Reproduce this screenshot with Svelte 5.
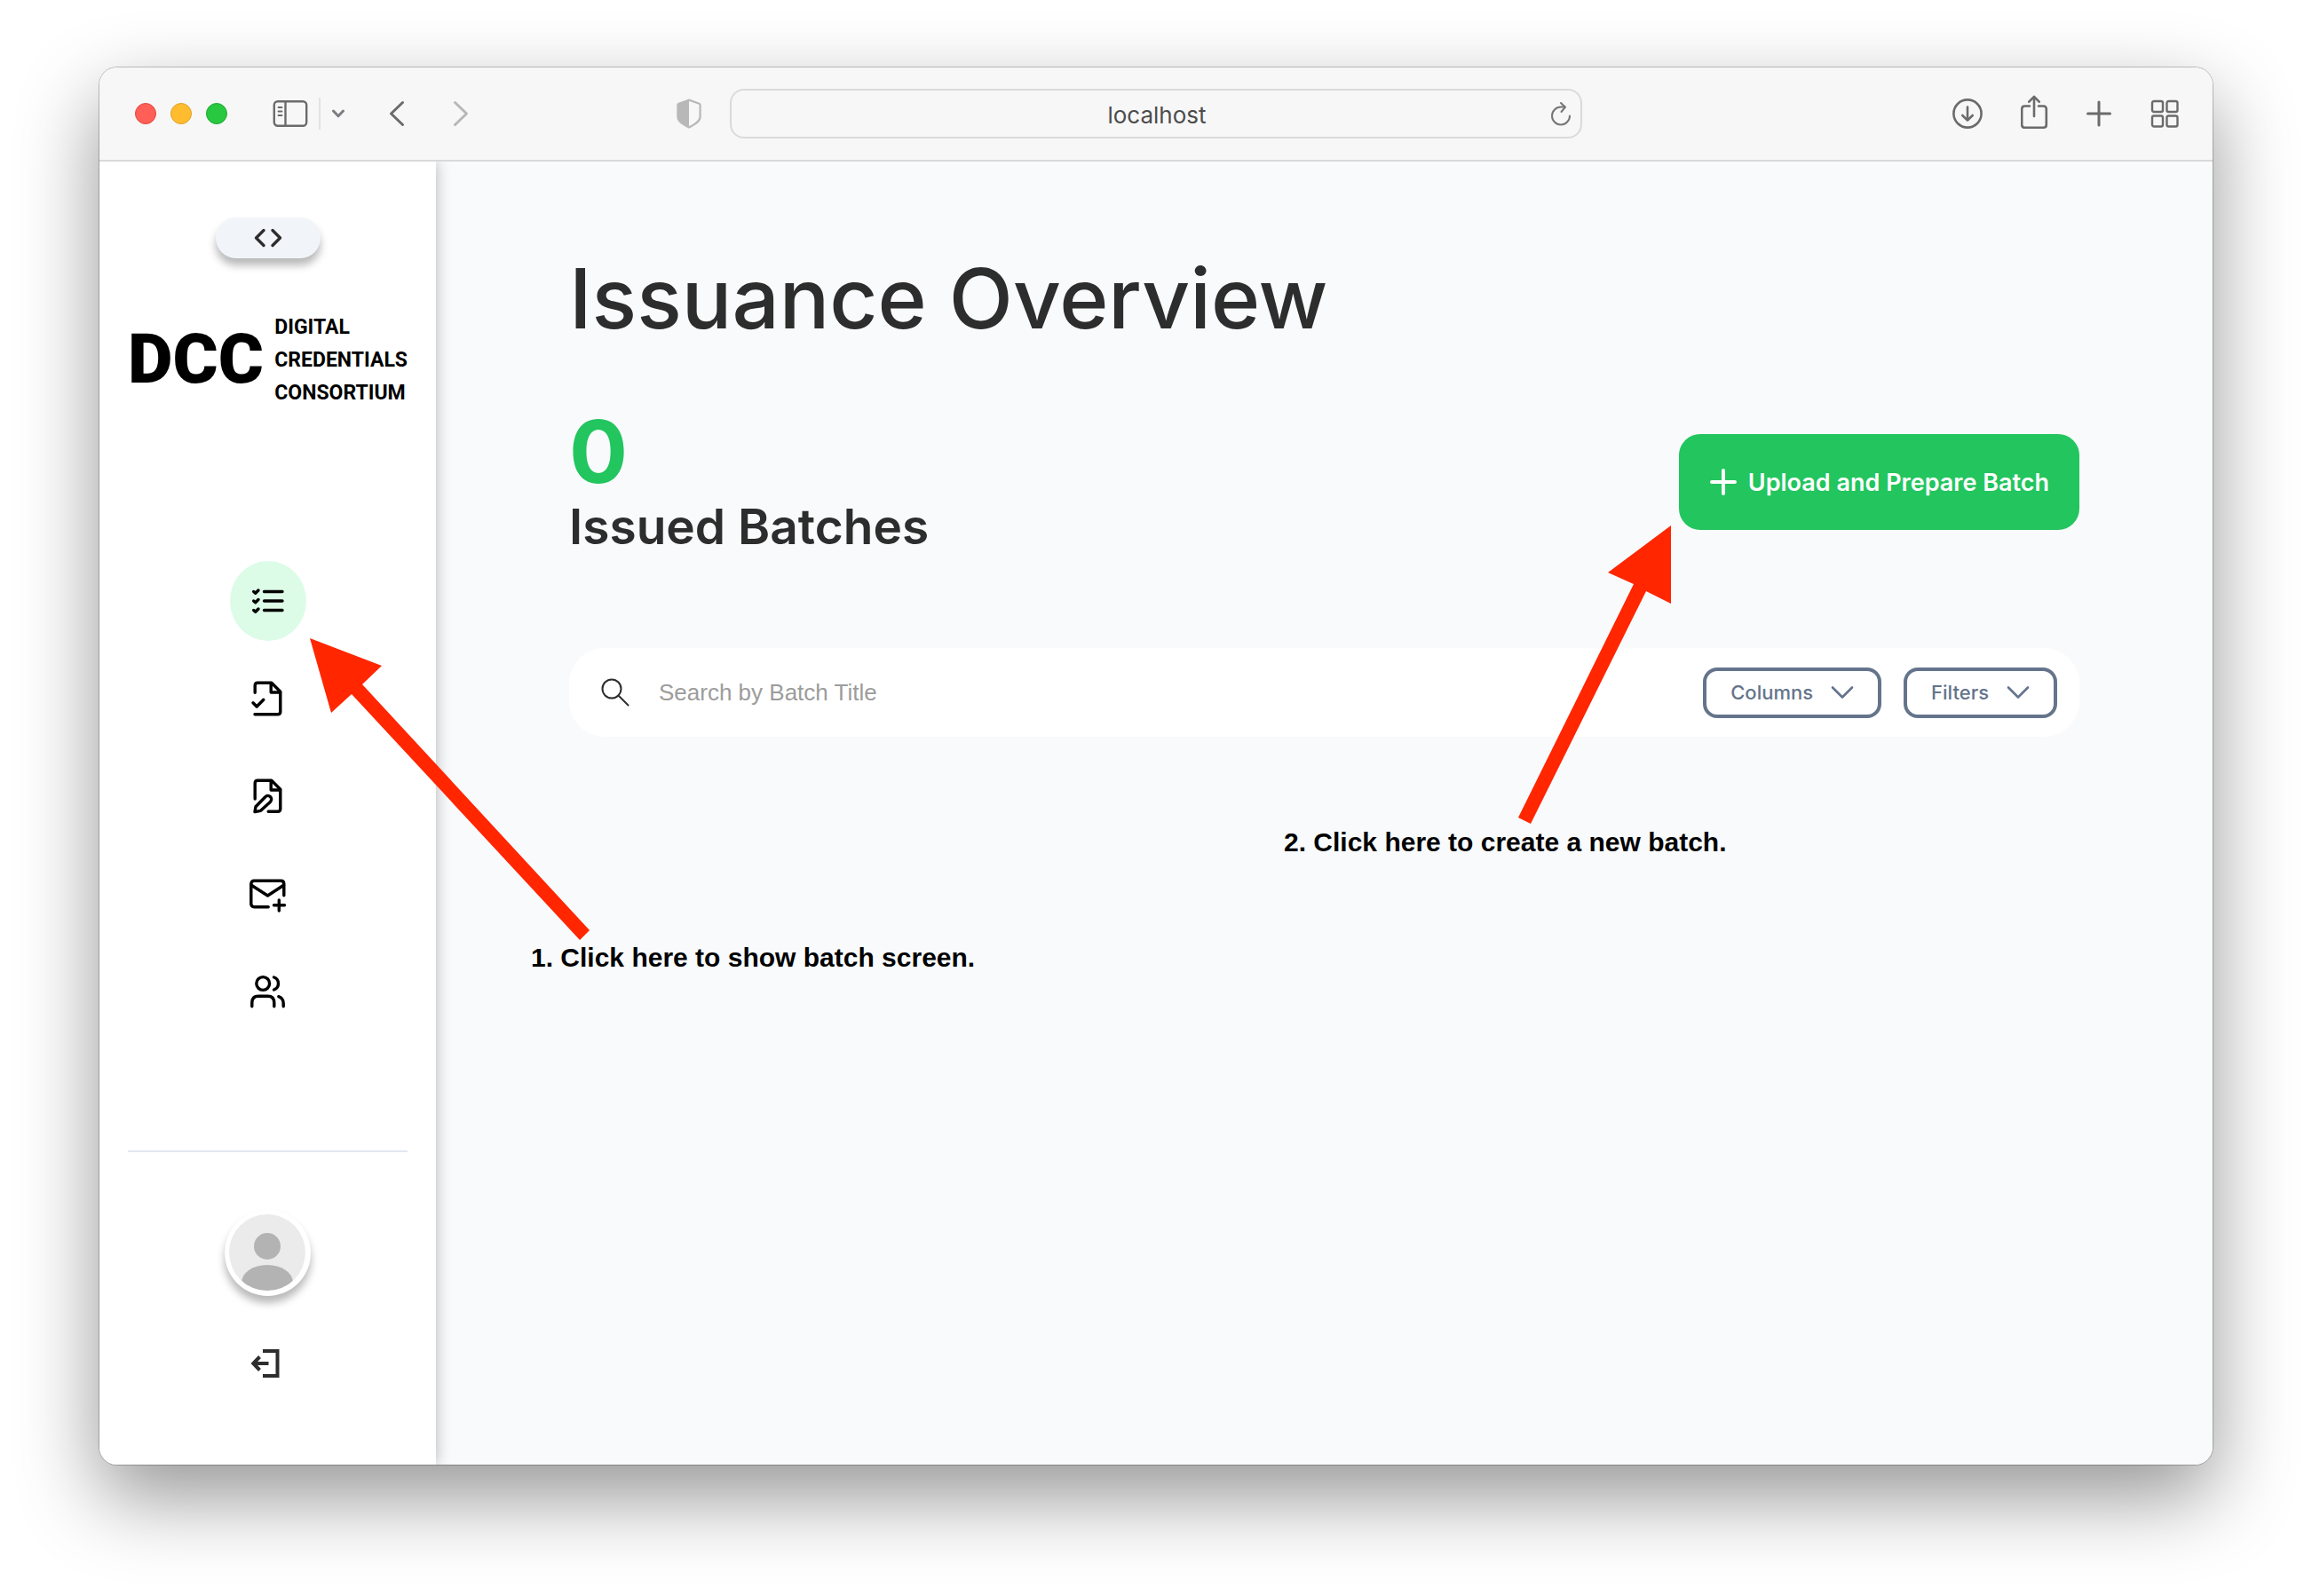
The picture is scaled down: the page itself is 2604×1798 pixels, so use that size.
<script>
  let url = $state('localhost');
  let query = $state('');
  const issued = 0;

  const nav = [
    { id: 'batches', label: 'Batches' },
    { id: 'verify', label: 'Verify credentials' },
    { id: 'templates', label: 'Credential templates' },
    { id: 'emails', label: 'Email templates' },
    { id: 'users', label: 'Users' }
  ];
  const menus = ['Columns', 'Filters'];
</script>

<div class="desktop">
  <div class="window">
    <header class="toolbar">
      <div class="tools start">
        <div class="lights">
          <button class="light red" aria-label="Close"></button>
          <button class="light amber" aria-label="Minimize"></button>
          <button class="light green" aria-label="Zoom"></button>
        </div>
        <div class="sidebar-tools">
          <button aria-label="Show sidebar">
            <svg width="40" height="32" viewBox="0 0 40 32" fill="none" stroke="#6b6b6b" stroke-width="2.4" stroke-linecap="round">
              <rect x="1.8" y="2.2" width="36.4" height="27.6" rx="4" />
              <path d="M14.5 2.5v27" />
              <path d="M6.5 9h4M6.5 13.5h4M6.5 18h4" stroke-width="1.8" />
            </svg>
          </button>
          <span class="rule"></span>
          <button aria-label="Tab groups">
            <svg width="16" height="12" viewBox="0 0 16 12" fill="none" stroke="#7d7d82" stroke-width="3" stroke-linecap="round" stroke-linejoin="round">
              <path d="M2.5 3L8 8.7L13.5 3" />
            </svg>
          </button>
        </div>
        <div class="history">
          <button aria-label="Back">
            <svg width="18" height="30" viewBox="0 0 18 30" fill="none" stroke="#6b6b6b" stroke-width="3" stroke-linecap="round" stroke-linejoin="round">
              <path d="M15.5 2.5L2.5 15L15.5 27.5" />
            </svg>
          </button>
          <button aria-label="Forward">
            <svg width="18" height="30" viewBox="0 0 18 30" fill="none" stroke="#b7b7b7" stroke-width="3" stroke-linecap="round" stroke-linejoin="round">
              <path d="M2.5 2.5L15.5 15L2.5 27.5" />
            </svg>
          </button>
        </div>
        <button class="shield" aria-label="Privacy report">
          <svg width="28" height="34" viewBox="0 0 28 34">
            <path d="M14 1.6L25.5 5.8Q26.6 6.2 26.6 7.4V20.5C26.6 26 20 29.5 14 32.6C8 29.5 1.4 26 1.4 20.5V7.4Q1.4 6.2 2.5 5.8Z" fill="none" stroke="#b8b8b8" stroke-width="2.2" />
            <path d="M14 1.6V32.6C8 29.5 1.4 26 1.4 20.5V7.4Q1.4 6.2 2.5 5.8Z" fill="#b8b8b8" />
          </svg>
        </button>
      </div>
      <div class="address">
        <input type="text" aria-label="Address" bind:value={url} />
        <button aria-label="Reload">
          <svg width="24" height="28" viewBox="0 0 24 28" fill="none" stroke="#757575" stroke-width="2" stroke-linecap="round" stroke-linejoin="round">
            <path d="M22 16.5A10 10 0 1 1 12 6.5H16.5" />
            <path d="M12 2L17 6.7L12.5 12" />
          </svg>
        </button>
      </div>
      <div class="tools end">
        <button aria-label="Downloads">
          <svg width="36" height="36" viewBox="0 0 36 36" fill="none" stroke="#6b6b6b" stroke-width="2.6" stroke-linecap="round" stroke-linejoin="round">
            <circle cx="18" cy="18" r="15.6" />
            <path d="M18 10.500V25.500M12.300 20L18 25.700L23.700 20" />
          </svg>
        </button>
        <button aria-label="Share">
          <svg class="share" width="32" height="40" viewBox="0 0 32 40" fill="none" stroke="#6b6b6b" stroke-width="2.6" stroke-linecap="round" stroke-linejoin="round">
            <path d="M10 13.5H4.500Q1.200 13.500 1.200 16.800V34.500Q1.200 37.800 4.500 37.800H25.500Q28.800 37.800 28.800 34.500V16.800Q28.800 13.500 25.500 13.500H20" />
            <path d="M15 25V3M9.300 8.700L15 2.800L20.700 8.700" />
          </svg>
        </button>
        <button aria-label="New tab">
          <svg width="30" height="30" viewBox="0 0 30 30" fill="none" stroke="#6b6b6b" stroke-width="3" stroke-linecap="round">
            <path d="M14 2V28M1.500 15H26.500" />
          </svg>
        </button>
        <button aria-label="Tab overview">
          <svg width="32" height="32" viewBox="0 0 32 32" fill="none" stroke="#6b6b6b" stroke-width="2.4">
            <rect x="2" y="2" width="12" height="12" rx="2" />
            <rect x="18.500" y="2" width="12" height="12" rx="2" />
            <rect x="2" y="18.500" width="12" height="12" rx="2" />
            <rect x="18.500" y="18.500" width="12" height="12" rx="2" />
          </svg>
        </button>
      </div>
    </header>

    <div class="page">
      <aside class="sidebar">
        <button class="pill" aria-label="Resize sidebar">
          <svg width="32" height="24" viewBox="0 0 32 24" fill="none" stroke="#2d2d2d" stroke-width="3.4" stroke-linecap="round" stroke-linejoin="round">
            <path d="M11 3.500L2.500 12L11 20.500M21 3.500L29.500 12L21 20.500" />
          </svg>
        </button>
        <a class="logo" href="#home">
          <span class="mark">DCC</span>
          <span class="name">DIGITAL<br />CREDENTIALS<br />CONSORTIUM</span>
        </a>
        <nav aria-label="Main">
          {#each nav as item, i}
            <a href="#{item.id}" class:active={i === 0} aria-label={item.label}>
              <svg width="48" height="48" viewBox="0 0 48 48" fill="none" stroke="#000" stroke-width="3.4" stroke-linecap="round" stroke-linejoin="round">
                {#if item.id === 'batches'}
                  <path d="M19.500 13.500H40M19.500 24H40M19.500 34.500H40" />
                  <path d="M7.700 13.500L9.700 15.300L13 12M7.700 24L9.700 25.800L13 22.500M7.700 34.500L9.700 36.300L13 33" />
                {:else if item.id === 'verify'}
                  <path d="M9.200 17.300V9.300Q9.200 6.300 12.200 6.300H27.800L37.800 16.300V38.700Q37.800 41.700 34.800 41.700H9" />
                  <path d="M27.200 7V17H37.500" />
                  <path d="M7 28.700L11.200 33L18.800 25.300" />
                {:else if item.id === 'templates'}
                  <path d="M9.200 27V9.300Q9.200 6.300 12.200 6.300H27.800L37.800 16.300V38.300Q37.800 41.300 34.800 41.300H24.200" />
                  <path d="M27.200 7V17H37.500" />
                  <path d="M9 41.600L10 35.700L20.800 24.800A3.900 3.900 0 0 1 26.600 30.200L15.600 40.300Z" />
                {:else if item.id === 'emails'}
                  <path d="M24.200 38.700H8.300Q4.800 38.700 4.800 35.200V12.800Q4.800 9.300 8.300 9.300H38.300Q41.800 9.300 41.800 12.800V25.700" />
                  <path d="M5.200 14.300L23.500 26L41.500 14.300" />
                  <path d="M30.500 36.700H42.500M36.300 31V43" />
                {:else}
                  <circle cx="18.200" cy="15" r="7.400" />
                  <path d="M30.500 8A7.400 7.400 0 0 1 30.500 22" />
                  <path d="M5.800 40.700V36.800Q5.800 29.300 13 29.300H23.600Q30.800 29.300 30.800 36.800V40.700" />
                  <path d="M35.800 29.700Q41.200 31.500 41.200 37.500V40.700" />
                {/if}
              </svg>
            </a>
          {/each}
        </nav>
        <hr />
        <button class="avatar" aria-label="Account">
          <svg width="86" height="86" viewBox="0 0 86 86">
            <defs><clipPath id="face"><circle cx="43" cy="43" r="43" /></clipPath></defs>
            <g clip-path="url(#face)">
              <rect width="86" height="86" fill="#ebebeb" />
              <circle cx="43" cy="36" r="15" fill="#b3b3b3" />
              <ellipse cx="43" cy="77" rx="29" ry="20" fill="#b3b3b3" />
            </g>
          </svg>
        </button>
        <button class="logout" aria-label="Log out">
          <svg width="40" height="36" viewBox="0 0 40 36" fill="none" stroke="#2d2d2d" stroke-width="4">
            <path d="M14 4H30.500V32H14" />
            <path d="M20.500 18H3.500M10.500 10.500L3.300 18L10.500 25.500" />
          </svg>
        </button>
      </aside>

      <main>
        <h1>Issuance Overview</h1>
        <section class="summary">
          <div>
            <p class="count">{issued}</p>
            <h2>Issued Batches</h2>
          </div>
          <button class="upload">
            <svg width="32" height="32" viewBox="0 0 32 32" fill="none" stroke="#fff" stroke-width="4" stroke-linecap="round">
              <path d="M16 3V29M3 16H29" />
            </svg>
            Upload and Prepare Batch
          </button>
        </section>
        <form class="search" onsubmit={(e) => e.preventDefault()}>
          <svg width="32" height="32" viewBox="0 0 32 32" fill="none" stroke="#2d2d2d" stroke-width="2" stroke-linecap="round">
            <circle cx="12" cy="12" r="10.500" />
            <path d="M19.500 19.500L30.500 30.500" />
          </svg>
          <input type="text" aria-label="Search by Batch Title" placeholder="Search by Batch Title" bind:value={query} />
          {#each menus as menu}
            <button type="button" class="menu" aria-haspopup="menu">
              {menu}
              <svg width="26" height="16" viewBox="0 0 26 16" fill="none" stroke="#64748b" stroke-width="2.600" stroke-linecap="round" stroke-linejoin="round">
                <path d="M2 2.500L13 13.500L24 2.500" />
              </svg>
            </button>
          {/each}
        </form>
      </main>
    </div>

    <div class="notes">
      <svg width="2380" height="1574" viewBox="112 76 2380 1574" fill="#ff2600" aria-hidden="true">
        <path d="M349 719L430 750L408 771L664 1048L653 1059L396 782L373 803Z" />
        <path d="M1882 592V680L1854 666L1724 928L1710 921L1840 658L1811 645Z" />
      </svg>
      <p class="note first">1. Click here to show batch screen.</p>
      <p class="note second">2. Click here to create a new batch.</p>
    </div>
  </div>
</div>

<style>
  :global(body) {
    background: #fff;
  }
  * {
    box-sizing: border-box;
  }
  button {
    display: flex;
    align-items: center;
    justify-content: center;
    padding: 0;
    border: 0;
    background: none;
    font-family: inherit;
    cursor: pointer;
  }
  svg {
    display: block;
    flex: none;
  }
  .desktop {
    display: flex;
    min-height: 100vh;
    padding: 76px 112px 148px;
    font-family: Inter, 'Liberation Sans', sans-serif;
    color: #2d2d2d;
  }
  .window {
    position: relative;
    display: flex;
    flex: 1;
    flex-direction: column;
    min-width: 0;
    border-radius: 20px;
    box-shadow:
      0 0 0 1px rgba(0, 0, 0, 0.22),
      0 36px 90px rgba(0, 0, 0, 0.42);
  }
  .toolbar {
    display: grid;
    grid-template-columns: minmax(0, 1fr) minmax(0, 960px) minmax(0, 1fr);
    align-items: center;
    height: 106px;
    border-bottom: 2px solid #d9d9d9;
    border-radius: 20px 20px 0 0;
    background: #f7f7f7;
  }
  .tools {
    display: flex;
    align-items: center;
  }
  .start {
    padding: 0 32px 0 40px;
  }
  .end {
    justify-content: flex-end;
    gap: 42px;
    padding-right: 38px;
  }
  .share {
    margin-bottom: 4px;
  }
  .lights {
    display: flex;
    gap: 16px;
  }
  .light {
    width: 24px;
    height: 24px;
    border-radius: 50%;
  }
  .red {
    border: 1px solid #e2463f;
    background: #ff5f57;
  }
  .amber {
    border: 1px solid #e0a028;
    background: #febc2e;
  }
  .green {
    border: 1px solid #1daa2f;
    background: #28c840;
  }
  .sidebar-tools {
    display: flex;
    align-items: center;
    gap: 12px;
    margin-left: 51px;
  }
  .rule {
    width: 2px;
    height: 36px;
    background: #e3e3e3;
  }
  .history {
    display: flex;
    gap: 54px;
    margin-left: 49px;
  }
  .shield {
    margin-left: auto;
  }
  .address {
    display: flex;
    align-items: center;
    height: 56px;
    padding: 0 10px 0 36px;
    border: 2px solid #dadada;
    border-radius: 16px;
  }
  .address input {
    flex: 1;
    min-width: 0;
    padding: 4px 0 0;
    border: 0;
    background: none;
    color: #4c4c4c;
    font: 400 26px/32px Inter, sans-serif;
    text-align: center;
  }
  .page {
    display: flex;
    flex: 1;
    overflow: hidden;
    border-radius: 0 0 20px 20px;
    background: #f8fafc;
  }
  .sidebar {
    display: flex;
    flex: none;
    flex-direction: column;
    align-items: center;
    width: 379px;
    padding: 63px 32px;
    background: #fff;
    box-shadow: 0 0 16px rgba(0, 0, 0, 0.28);
  }
  .pill {
    width: 118px;
    height: 46px;
    border-radius: 23px;
    background: #f1f5f9;
    box-shadow: 0 8px 10px rgba(0, 0, 0, 0.28);
  }
  .logo {
    display: flex;
    align-items: center;
    justify-content: space-between;
    align-self: stretch;
    height: 112px;
    margin-top: 58px;
    color: #000;
    font-family: Roboto, 'Liberation Sans', sans-serif;
    text-decoration: none;
  }
  .mark {
    font-size: 78px;
    font-weight: 900;
    line-height: 112px;
  }
  .name {
    font-size: 23px;
    font-weight: 700;
    line-height: 37px;
  }
  nav {
    display: flex;
    flex-direction: column;
    gap: 20px;
    margin-top: 171px;
  }
  nav a {
    display: flex;
    align-items: center;
    justify-content: center;
    width: 86px;
    height: 90px;
    border-radius: 50%;
  }
  nav a.active {
    background: #dcfce7;
  }
  hr {
    width: 100%;
    height: 2px;
    margin: 134px 0 65px;
    border: 0;
    background: #e2e8f0;
  }
  .avatar {
    width: 97px;
    height: 97px;
    padding: 0 1px 2px 0;
    border-radius: 50%;
    background: #fff;
    box-shadow: 0 8px 10px rgba(0, 0, 0, 0.28);
  }
  .logout {
    margin-top: 58px;
  }
  main {
    flex: 1;
    min-width: 0;
    padding: 93px 150px;
  }
  h1,
  h2,
  p {
    margin: 0;
  }
  h1 {
    font-size: 94px;
    font-weight: 500;
    line-height: 122px;
  }
  .summary {
    display: flex;
    align-items: center;
    justify-content: space-between;
    margin-top: 62px;
  }
  .count {
    color: #22c55e;
    font-size: 98px;
    font-weight: 700;
    line-height: 100px;
  }
  h2 {
    font-size: 55px;
    font-weight: 600;
    line-height: 68px;
  }
  .upload {
    gap: 12px;
    height: 108px;
    padding: 0 34px;
    border-radius: 24px;
    background: #22c55e;
    color: #fff;
    font-size: 27px;
    font-weight: 600;
  }
  .search {
    display: flex;
    align-items: center;
    gap: 25px;
    height: 100px;
    margin-top: 103px;
    padding: 0 25px 0 36px;
    border-radius: 40px;
    background: #fff;
  }
  .search input {
    flex: 1;
    min-width: 0;
    padding: 0 8px;
    border: 0;
    background: none;
    color: #2d2d2d;
    font: 400 26px/36px 'Liberation Sans', sans-serif;
  }
  .search input::placeholder {
    color: #9c9c9c;
    opacity: 1;
  }
  .menu {
    gap: 20px;
    height: 57px;
    padding: 0 27px;
    border: 4px solid #64748b;
    border-radius: 16px;
    color: #64748b;
    font-size: 22px;
    font-weight: 500;
  }
  .notes {
    position: absolute;
    inset: 0;
    pointer-events: none;
  }
  .note {
    position: absolute;
    color: #000;
    font: 700 30px/36px 'Liberation Sans', sans-serif;
    white-space: nowrap;
  }
  .first {
    top: 985px;
    left: 486px;
  }
  .second {
    top: 855px;
    left: 1334px;
  }
</style>
